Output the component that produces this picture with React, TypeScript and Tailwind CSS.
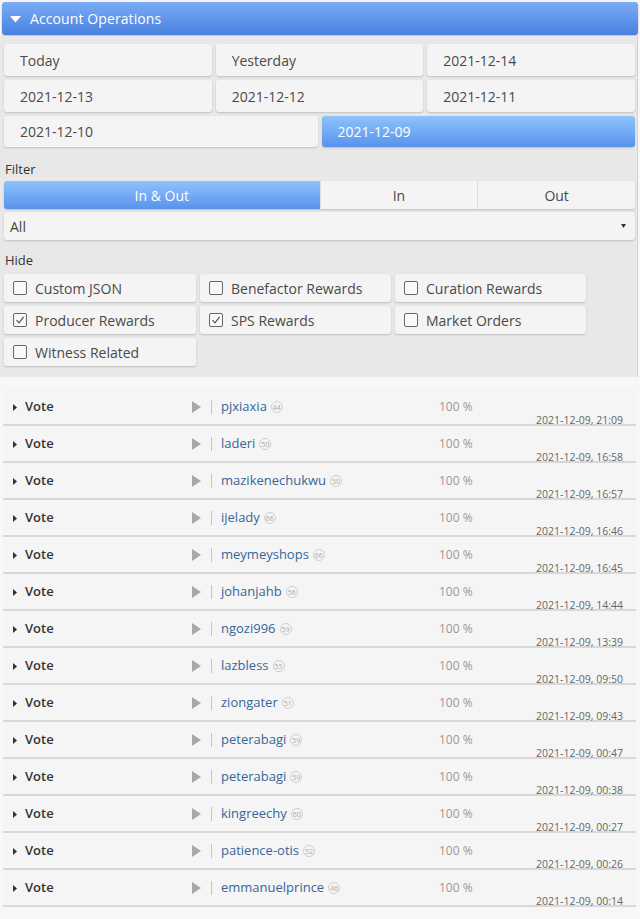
import React from "react";

const dateBtns: { label: string; wide?: boolean; active?: boolean }[] = [
  { label: "Today" },
  { label: "Yesterday" },
  { label: "2021-12-14" },
  { label: "2021-12-13" },
  { label: "2021-12-12" },
  { label: "2021-12-11" },
  { label: "2021-12-10", wide: true },
  { label: "2021-12-09", wide: true, active: true },
];

const hides: { label: string; checked?: boolean }[] = [
  { label: "Custom JSON" },
  { label: "Benefactor Rewards" },
  { label: "Curation Rewards" },
  { label: "Producer Rewards", checked: true },
  { label: "SPS Rewards", checked: true },
  { label: "Market Orders" },
  { label: "Witness Related" },
];

const ops: { user: string; rep: number; time: string }[] = [
  { user: "pjxiaxia", rep: 44, time: "21:09" },
  { user: "laderi", rep: 50, time: "16:58" },
  { user: "mazikenechukwu", rep: 50, time: "16:57" },
  { user: "ijelady", rep: 66, time: "16:46" },
  { user: "meymeyshops", rep: 66, time: "16:45" },
  { user: "johanjahb", rep: 56, time: "14:44" },
  { user: "ngozi996", rep: 59, time: "13:39" },
  { user: "lazbless", rep: 55, time: "09:50" },
  { user: "ziongater", rep: 51, time: "09:43" },
  { user: "peterabagi", rep: 59, time: "00:47" },
  { user: "peterabagi", rep: 59, time: "00:38" },
  { user: "kingreechy", rep: 60, time: "00:27" },
  { user: "patience-otis", rep: 52, time: "00:26" },
  { user: "emmanuelprince", rep: 46, time: "00:14" },
];

function Checkbox({ checked }: { checked?: boolean }) {
  return (
    <span className="w-[14px] h-[14px] border-[1.5px] border-[#666] rounded-[2px] bg-[#fafafa] flex items-center justify-center shrink-0">
      {checked && (
        <svg width="10" height="10" viewBox="0 0 10 10">
          <path d="M1.5 5.2 L4 7.8 L8.6 1.8" fill="none" stroke="#555" strokeWidth="1.2" />
        </svg>
      )}
    </span>
  );
}

export default function App() {
  return (
    <div className="min-h-[919px] w-[640px] bg-[#f7f7f7] font-['Open_Sans',sans-serif] text-[#4a4a4a] overflow-hidden">
      {/* Header */}
      <div className="pt-[2px] pl-[2px] w-[638px]">
        <div className="h-[33px] rounded-[3px] bg-gradient-to-b from-[#7aacf7] to-[#4a80de] shadow-[0_1px_2px_rgba(0,0,0,0.25)] flex items-center pl-[8px] text-white text-[14px]">
          <svg width="11" height="7" viewBox="0 0 11 7" className="mt-[1px]">
            <path d="M0 0 L11 0 L5.5 6.5 Z" fill="#ffffff" />
          </svg>
          <span className="ml-[9px] tracking-[0.1px]">Account Operations</span>
        </div>
      </div>

      {/* Panel */}
      <div className="mt-[1px] w-[638px] bg-[#e8e8e8] border-r border-[#d2d2d2] pl-[4px] pr-[2px] pt-[8px] pb-[11px]">
        <div className="grid grid-cols-6 gap-x-[4px] gap-y-[4px]">
          {dateBtns.map((b) => (
            <div
              key={b.label}
              className={
                (b.wide ? "col-span-3 h-[31px] " : "col-span-2 h-[32px] ") +
                (b.active
                  ? "bg-gradient-to-b from-[#8fc3fb] to-[#5892ee] text-white "
                  : "bg-[#f4f4f4] text-[#4a4a4a] ") +
                "rounded-[3px] shadow-[0_1px_2px_rgba(0,0,0,0.18)] flex items-center pl-[16px] text-[14px]"
              }
            >
              {b.label}
            </div>
          ))}
        </div>

        <div className="mt-[13px] pl-[1px] text-[13px] leading-[18px] text-[#333]">Filter</div>
        <div className="mt-[3px] h-[28px] flex rounded-[3px] shadow-[0_1px_2px_rgba(0,0,0,0.18)] text-[14px]">
          <div className="w-1/2 bg-gradient-to-b from-[#8fc3fb] to-[#5892ee] text-white flex items-center justify-center rounded-l-[3px]">
            In &amp; Out
          </div>
          <div className="w-1/4 bg-[#f4f4f4] flex items-center justify-center border-l border-[#dcdcdc]">In</div>
          <div className="w-1/4 bg-[#f4f4f4] flex items-center justify-center border-l border-[#dcdcdc] rounded-r-[3px]">
            Out
          </div>
        </div>
        <div className="mt-[3px] h-[28px] bg-[#f4f4f4] rounded-[3px] shadow-[0_1px_2px_rgba(0,0,0,0.18)] flex items-center justify-between pl-[6px] pr-[9px] text-[14px] text-[#444]">
          <span>All</span>
          <svg width="5" height="4" viewBox="0 0 5 4">
            <path d="M0 0 L5 0 L2.5 4 Z" fill="#333" />
          </svg>
        </div>

        <div className="mt-[11px] pl-[1px] text-[13px] leading-[18px] text-[#333]">Hide</div>
        <div className="mt-[5px] grid grid-cols-[192px_191px_191px] gap-x-[4px] gap-y-[4px]">
          {hides.map((h) => (
            <div
              key={h.label}
              className="h-[28px] bg-[#f4f4f4] rounded-[3px] shadow-[0_1px_2px_rgba(0,0,0,0.18)] flex items-center pl-[9px] gap-[8px] text-[14px] text-[#4a4a4a]"
            >
              <Checkbox checked={h.checked} />
              <span>{h.label}</span>
            </div>
          ))}
        </div>
      </div>

      {/* Operations list */}
      <div className="mt-[12px] ml-[3px] w-[633px]">
        {ops.map((o, i) => (
          <div key={i} className="h-[37px] border-b-2 border-[#d8d8d8] bg-[#f5f5f5] flex">
            <div className="flex items-center h-[36px] pl-[10px] w-[533px]">
              <svg width="4" height="7" viewBox="0 0 4 7" className="shrink-0">
                <path d="M0 0 L4 3.5 L0 7 Z" fill="#333" />
              </svg>
              <span className="ml-[8px] w-[167px] text-[13px] font-semibold text-[#333]">Vote</span>
              <svg width="9" height="12" viewBox="0 0 9 12" className="shrink-0">
                <path d="M0 0 L9 6 L0 12 Z" fill="#a8a8a8" />
              </svg>
              <span className="ml-[10px] w-[1px] h-[14px] bg-[#c4c4c4] shrink-0" />
              <div className="ml-[9px] w-[218px] flex items-center">
                <span className="text-[13px] text-[#35659a]">{o.user}</span>
                <span className="ml-[4px] w-[12px] h-[12px] rounded-full border border-[#cfcfcf] text-[7px] leading-none text-[#aaa] flex items-center justify-center">
                  {o.rep}
                </span>
              </div>
              <span className="text-[12px] text-[#999]">100 %</span>
            </div>
            <div className="self-end mb-[-2px] text-[10.5px] leading-[12px] text-[#666] whitespace-nowrap">
              2021-12-09, {o.time}
            </div>
          </div>
        ))}
      </div>
    </div>
  );
}
